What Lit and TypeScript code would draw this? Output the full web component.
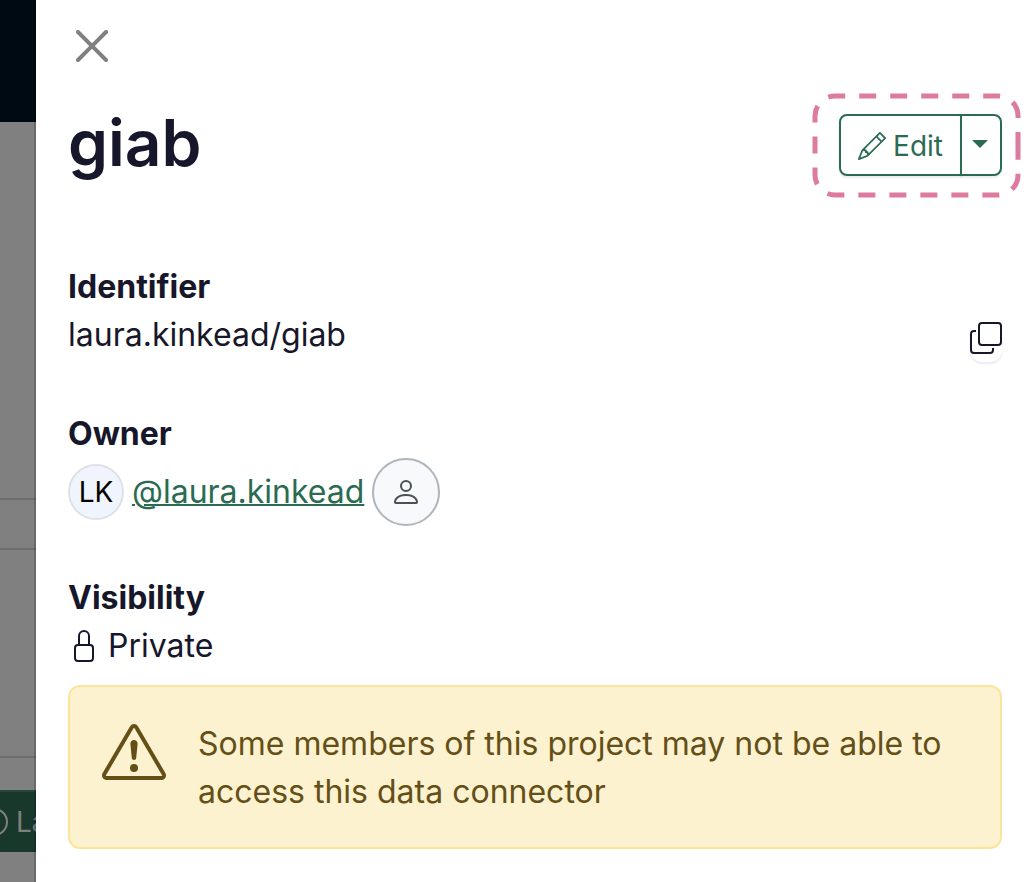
import { LitElement, html, css, svg } from "lit";
import { customElement } from "lit/decorators.js";

const icon = (d: string, cls: string) =>
  html`<svg class=${cls} viewBox="0 0 16 16" fill="currentColor" aria-hidden="true">${svg`<path fill-rule="evenodd" d=${d} />`}</svg>`;

const CLOSE =
  "M.293.293a1 1 0 0 1 1.414 0L8 6.586 14.293.293a1 1 0 1 1 1.414 1.414L9.414 8l6.293 6.293a1 1 0 0 1-1.414 1.414L8 9.414l-6.293 6.293a1 1 0 0 1-1.414-1.414L6.586 8 .293 1.707a1 1 0 0 1 0-1.414";
const PENCIL =
  "M12.146.146a.5.5 0 0 1 .708 0l3 3a.5.5 0 0 1 0 .708l-10 10a.5.5 0 0 1-.168.11l-5 2a.5.5 0 0 1-.65-.65l2-5a.5.5 0 0 1 .11-.168zM11.207 2.5 13.5 4.793 14.793 3.5 12.5 1.207zm1.586 3L10.5 3.207 4 9.707V10h.5a.5.5 0 0 1 .5.5v.5h.5a.5.5 0 0 1 .5.5v.5h.293zm-9.761 5.175-.106.106-1.528 3.821 3.821-1.528.106-.106A.5.5 0 0 1 5 12.5V12h-.5a.5.5 0 0 1-.5-.5V11h-.5a.5.5 0 0 1-.468-.325";
const COPY =
  "M4 2a2 2 0 0 1 2-2h8a2 2 0 0 1 2 2v8a2 2 0 0 1-2 2H6a2 2 0 0 1-2-2zm2-1a1 1 0 0 0-1 1v8a1 1 0 0 0 1 1h8a1 1 0 0 0 1-1V2a1 1 0 0 0-1-1zM2 5a1 1 0 0 0-1 1v8a1 1 0 0 0 1 1h8a1 1 0 0 0 1-1v-1h1v1a2 2 0 0 1-2 2H2a2 2 0 0 1-2-2V6a2 2 0 0 1 2-2h1v1z";
const PERSON =
  "M8 8a3 3 0 1 0 0-6 3 3 0 0 0 0 6m2-3a2 2 0 1 1-4 0 2 2 0 0 1 4 0m4 8c0 1-1 1-1 1H3s-1 0-1-1 1-4 6-4 6 3 6 4m-1-.004c-.001-.246-.154-.986-.832-1.664C11.516 10.68 10.289 10 8 10s-3.516.68-4.168 1.332c-.678.678-.83 1.418-.832 1.664z";
const LOCK =
  "M8 1a2 2 0 0 1 2 2v4H6V3a2 2 0 0 1 2-2m3 6V3a3 3 0 0 0-6 0v4a2 2 0 0 0-2 2v5a2 2 0 0 0 2 2h6a2 2 0 0 0 2-2V9a2 2 0 0 0-2-2M5 8h6a1 1 0 0 1 1 1v5a1 1 0 0 1-1 1H5a1 1 0 0 1-1-1V9a1 1 0 0 1 1-1";
const WARNING =
  "M7.938 2.016A.13.13 0 0 1 8.002 2a.13.13 0 0 1 .063.016.15.15 0 0 1 .054.057l6.857 11.667c.036.06.035.124.002.183a.2.2 0 0 1-.054.06.1.1 0 0 1-.066.017H1.146a.1.1 0 0 1-.066-.017.2.2 0 0 1-.054-.06.18.18 0 0 1 .002-.183L7.884 2.073a.15.15 0 0 1 .054-.057m1.044-.45a1.13 1.13 0 0 0-1.96 0L.165 13.233c-.457.778.091 1.767.98 1.767h13.713c.889 0 1.438-.99.98-1.767zM7.002 12a1 1 0 1 1 2 0 1 1 0 0 1-2 0M7.1 5.995a.905.905 0 1 1 1.8 0l-.35 3.507a.552.552 0 0 1-1.1 0z";

@customElement("page-backdrop")
export class PageBackdrop extends LitElement {
  static styles = css`
    :host {
      display: block;
      overflow: hidden;
      background: #808080;
      color: #808080;
      font-size: 28px;
    }
    .nav {
      height: 122px;
      background: #000a13;
    }
    .block {
      box-sizing: border-box;
      border-bottom: 2px solid #6e6e6e;
    }
    .intro {
      height: 378px;
    }
    .head {
      height: 50px;
    }
    .body {
      height: 208px;
      margin-bottom: 32px;
    }
    .launch {
      box-sizing: border-box;
      display: flex;
      align-items: center;
      justify-content: flex-end;
      gap: 8px;
      width: 56px;
      height: 62px;
      margin-left: -20px;
      padding: 0;
      border: 0;
      border-top: 2px solid #23483a;
      background: #18382c;
      color: #808080;
      font: inherit;
      white-space: nowrap;
    }
    .ring {
      flex: none;
      width: 28px;
      height: 28px;
    }
    .label {
      width: 20px;
    }
  `;

  render() {
    return html`
      <div class="nav"></div>
      <div class="block intro"></div>
      <div class="block head"></div>
      <div class="block body"></div>
      <button class="launch" tabindex="-1">
        <svg class="ring" viewBox="0 0 28 28" fill="none" stroke="currentColor" stroke-width="2">
          <circle cx="14" cy="14" r="13" />
        </svg>
        <span class="label">La</span>
      </button>
    `;
  }
}

@customElement("edit-menu")
export class EditMenu extends LitElement {
  static styles = css`
    :host {
      display: flex;
      position: relative;
    }
    button {
      box-sizing: border-box;
      display: flex;
      align-items: center;
      height: 62px;
      margin: 0;
      border: 2px solid #2a6b52;
      background: #fff;
      color: #2a6b52;
      font: inherit;
      font-size: 28px;
      box-shadow: 0 2px 2px rgba(0, 0, 0, 0.08);
    }
    .edit {
      gap: 7px;
      padding: 2px 17px 0;
      border-radius: 8px 0 0 8px;
    }
    .toggle {
      width: 42px;
      justify-content: center;
      margin-left: -2px;
      padding: 0 2px 2px 0;
      border-radius: 0 8px 8px 0;
    }
    .pencil {
      width: 28px;
      height: 28px;
    }
    .caret {
      width: 16px;
      height: 8px;
    }
    .marker {
      position: absolute;
      top: -21px;
      left: -27px;
      width: 209px;
      height: 105px;
      pointer-events: none;
    }
  `;

  render() {
    return html`
      <button class="edit">${icon(PENCIL, "pencil")}<span>Edit</span></button>
      <button class="toggle" aria-label="More actions">
        <svg class="caret" viewBox="0 0 16 8" fill="currentColor" aria-hidden="true"><path d="M0 0h16L8 8z" /></svg>
      </button>
      <svg class="marker" viewBox="0 0 209 105" fill="none" aria-hidden="true">
        <path
          d="M206 56V23A20 20 0 0 0 186 3H23A20 20 0 0 0 3 23V82A20 20 0 0 0 23 102H186A20 20 0 0 0 206 82V56"
          stroke="#dd7a9f"
          stroke-width="5"
          stroke-dasharray="17 14"
        />
      </svg>
    `;
  }
}

@customElement("app-root")
export class AppRoot extends LitElement {
  static styles = css`
    :host {
      display: grid;
      grid-template-columns: 36px minmax(0, 1fr);
      height: 100vh;
      overflow: hidden;
      font-family: Inter, "Liberation Sans", sans-serif;
      font-size: 32px;
      line-height: 48px;
      color: #17172b;
      background: #fff;
    }
    .panel {
      position: relative;
      box-sizing: border-box;
      padding: 22px 26px 32px 32px;
      background: #fff;
      box-shadow: -2px 0 0 rgba(0, 0, 0, 0.175);
    }
    button {
      margin: 0;
      border: 0;
      background: none;
      color: inherit;
      font: inherit;
    }
    .close {
      display: block;
      padding: 8px;
      color: #808080;
    }
    .icon {
      display: block;
      flex: none;
      width: 32px;
      height: 32px;
    }
    header {
      display: flex;
      justify-content: space-between;
      align-items: flex-start;
      margin: 34px 0 82px;
    }
    h1 {
      margin: 0;
      font-size: 64px;
      line-height: 77px;
      font-weight: 600;
    }
    edit-menu {
      margin-top: 10px;
    }
    .sections {
      display: flex;
      flex-direction: column;
      gap: 48px;
    }
    h2 {
      margin: 0;
      font-size: inherit;
      font-weight: 700;
    }
    .identifier {
      display: flex;
      justify-content: space-between;
      min-height: 51px;
    }
    .copy {
      align-self: flex-end;
      padding: 8px 0;
      border-radius: 12px;
      box-shadow: 0 2px 2px rgba(0, 0, 0, 0.08);
    }
    .owner {
      display: flex;
      align-items: center;
      gap: 8px;
    }
    .initials,
    .avatar {
      box-sizing: border-box;
      display: flex;
      align-items: center;
      justify-content: center;
      border-radius: 50%;
    }
    .initials {
      width: 56px;
      height: 56px;
      border: 2px solid #dee2e6;
      background: #f0f4fd;
      color: #000;
      font-size: 28px;
    }
    .avatar {
      width: 68px;
      height: 68px;
      border: 2px solid #adb5bd;
      background: #f8f9fa;
      color: #495057;
    }
    .person {
      width: 32px;
      height: 32px;
    }
    a {
      color: #2a6b52;
      text-decoration-thickness: 2px;
    }
    .visibility {
      display: flex;
      align-items: center;
      gap: 8px;
    }
    .alert {
      display: flex;
      align-items: flex-start;
      gap: 32px;
      margin-top: 15px;
      padding: 33px 32px 31px;
      border: 2px solid #fbe59c;
      border-radius: 12px;
      background: #fdf2d0;
      color: #644f17;
    }
    .alert p {
      margin: 0;
    }
    .warning {
      flex: none;
      width: 64px;
      height: 64px;
    }
  `;

  render() {
    return html`
      <page-backdrop aria-hidden="true"></page-backdrop>
      <main class="panel">
        <button class="close" aria-label="Close">${icon(CLOSE, "icon")}</button>
        <header>
          <h1>giab</h1>
          <edit-menu></edit-menu>
        </header>
        <div class="sections">
          <section>
            <h2>Identifier</h2>
            <div class="identifier">
              <span>laura.kinkead/giab</span>
              <button class="copy" aria-label="Copy identifier">${icon(COPY, "icon")}</button>
            </div>
          </section>
          <section>
            <h2>Owner</h2>
            <div class="owner">
              <span class="initials">LK</span>
              <a href="#owner">@laura.kinkead</a>
              <span class="avatar">${icon(PERSON, "person")}</span>
            </div>
          </section>
          <section>
            <h2>Visibility</h2>
            <div class="visibility">${icon(LOCK, "icon")}<span>Private</span></div>
            <div class="alert" role="alert">
              ${icon(WARNING, "warning")}
              <p>Some members of this project may not be able to access this data connector</p>
            </div>
          </section>
        </div>
      </main>
    `;
  }
}
